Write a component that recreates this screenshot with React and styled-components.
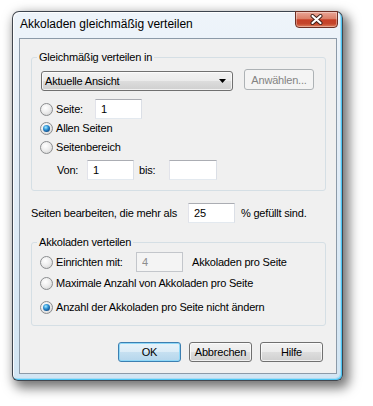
import React from "react";
import styled, { createGlobalStyle } from "styled-components";

const GlobalStyle = createGlobalStyle`
  html, body {
    margin: 0;
    padding: 0;
    background: #fff;
  }
  body {
    font-family: "Liberation Sans", Arial, sans-serif;
    font-size: 11px;
    letter-spacing: -0.2px;
    color: #000;
  }
`;

const Page = styled.div`
  width: 373px;
  height: 406px;
  padding: 11px 0 0 12px;
  box-sizing: border-box;
  overflow: hidden;
`;

const Window = styled.div`
  width: 331px;
  height: 370px;
  box-sizing: border-box;
  display: flex;
  flex-direction: column;
  border: 1px solid rgba(35, 40, 48, 0.85);
  border-radius: 7px 7px 6px 6px;
  background: linear-gradient(to bottom, #eef4fa 0%, #e3edf7 40%, #d2e5f3 100%);
  box-shadow: inset -1px -1px 0 #4cc5f3, inset -2px -2px 0 #a9dcf4,
    inset 1px 1px 0 rgba(255, 255, 255, 0.85), 4px 5px 12px 2px rgba(0, 0, 0, 0.55);
`;

const TitleBar = styled.div`
  height: 26px;
  display: flex;
  align-items: flex-start;
  flex-shrink: 0;
`;

const Title = styled.div`
  padding: 5px 0 0 7px;
  font-size: 12px;
  line-height: 14px;
  letter-spacing: 0;
  white-space: nowrap;
`;

const CloseButton = styled.div`
  margin: -1px 4px 0 auto;
  width: 43px;
  height: 17px;
  box-sizing: border-box;
  border: 1px solid #6e2f24;
  border-radius: 0 0 4px 4px;
  background: linear-gradient(to bottom, #e9a596 0%, #db8069 45%, #c63f26 52%, #c4452b 78%, #e07f5c 100%);
  box-shadow: inset 0 0 0 1px rgba(255, 255, 255, 0.35);
  display: flex;
  align-items: center;
  justify-content: center;
`;

const Client = styled.div`
  flex: 1;
  margin: 0 5px 6px 6px;
  border: 1px solid #8c9aa8;
  background: #f0f0f0;
  padding: 11px 10px 0 11px;
  display: flex;
  flex-direction: column;
`;

const Group = styled.fieldset`
  margin: ${(p) => p.$mt || 0}px 0 0 0;
  padding: ${(p) => p.$pt}px 10px ${(p) => p.$pb}px 9px;
  border: 1px solid #d5dfe5;
  border-radius: 3px;
  min-width: 0;
`;

const Legend = styled.legend`
  padding: 0 2px;
  margin-left: -4px;
  font-size: 11px;
  line-height: 14px;
`;

const Row = styled.div`
  display: flex;
  align-items: ${(p) => p.$align || "center"};
  height: ${(p) => p.$h || 18}px;
  margin-top: ${(p) => p.$mt || 0}px;
  padding-left: ${(p) => p.$pl || 0}px;
  white-space: nowrap;
`;

const Option = styled.label`
  display: flex;
  align-items: center;
  gap: 3px;
  margin-left: -1px;
  width: ${(p) => (p.$w ? `${p.$w}px` : "auto")};
  flex-shrink: 0;
`;

const RadioMark = styled.span`
  width: 13px;
  height: 13px;
  box-sizing: border-box;
  border-radius: 50%;
  border: 1px solid #8b8d8f;
  background: radial-gradient(circle at 40% 35%, #ffffff 0%, #eeeeee 45%, #cdcdcd 100%);
  display: flex;
  align-items: center;
  justify-content: center;
  flex-shrink: 0;

  &::after {
    content: "";
    width: 7px;
    height: 7px;
    border-radius: 50%;
    display: ${(p) => (p.$checked ? "block" : "none")};
    background: radial-gradient(circle at 40% 35%, #a6ecff 0%, #2f93d6 38%, #0f4d8a 75%, #0a3564 100%);
  }
`;

const Text = styled.span`
  display: inline-block;
  width: ${(p) => (p.$w ? `${p.$w}px` : "auto")};
  margin-left: ${(p) => p.$ml || 0}px;
  flex-shrink: 0;
`;

const Input = styled.input`
  width: ${(p) => p.$w}px;
  height: 20px;
  box-sizing: border-box;
  margin: 0;
  padding: 0 0 0 5px;
  border: 1px solid;
  border-color: ${(p) => (p.$disabled ? "#c3c6cb" : "#abadb3 #dbdfe6 #e3e9ef #e2e3ea")};
  background: ${(p) => (p.$disabled ? "#f4f4f4" : "#fff")};
  color: ${(p) => (p.$disabled ? "#8d8d8d" : "#000")};
  font: inherit;
  letter-spacing: inherit;
  outline: none;
  flex-shrink: 0;
`;

const Select = styled.div`
  width: 192px;
  height: 20px;
  margin-top: 2px;
  box-sizing: border-box;
  border: 1px solid #707070;
  border-radius: 3px;
  background: linear-gradient(to bottom, #f2f2f2 0%, #ebebeb 50%, #dddddd 51%, #cfcfcf 100%);
  box-shadow: inset 0 0 0 1px rgba(255, 255, 255, 0.7);
  display: flex;
  align-items: center;
  justify-content: space-between;
  padding: 0 6px 0 3px;
`;

const SideButton = styled.div`
  width: 70px;
  height: 21px;
  margin-left: 11px;
  box-sizing: border-box;
  border: 1px solid #adb2b5;
  border-radius: 3px;
  background: #f4f4f4;
  color: #838383;
  display: flex;
  align-items: center;
  justify-content: center;
`;

const ButtonBar = styled.div`
  display: flex;
  justify-content: flex-end;
  gap: 8px;
  margin-top: 16px;
  padding-right: 3px;
`;

const Button = styled.div`
  width: 63px;
  height: 20px;
  box-sizing: border-box;
  border: 1px solid ${(p) => (p.$default ? "#3c7fb1" : "#707070")};
  border-radius: 3px;
  background: ${(p) =>
    p.$default
      ? "linear-gradient(to bottom, #e8f3fa 0%, #dbecf7 50%, #c6e0f1 51%, #b5d6ec 100%)"
      : "linear-gradient(to bottom, #f2f2f2 0%, #ebebeb 50%, #dddddd 51%, #cfcfcf 100%)"};
  box-shadow: inset 0 0 0 1px ${(p) => (p.$default ? "#8fd8f8" : "rgba(255, 255, 255, 0.7)")};
  display: flex;
  align-items: center;
  justify-content: center;
`;

const Radio = ({ checked, width, children }) => (
  <Option $w={width}>
    <RadioMark $checked={checked} />
    {children}
  </Option>
);

const App = () => {
  return (
    <>
      <GlobalStyle />
      <Page>
        <Window>
          <TitleBar>
            <Title>Akkoladen gleichmäßig verteilen</Title>
            <CloseButton>
              <svg width="13" height="11" viewBox="0 0 13 11">
                <path d="M2.5 2 L10.5 9 M10.5 2 L2.5 9" stroke="#3b1d17" strokeWidth="4" strokeLinecap="round" fill="none" />
                <path d="M2.5 2 L10.5 9 M10.5 2 L2.5 9" stroke="#ffffff" strokeWidth="2.2" strokeLinecap="round" fill="none" />
              </svg>
            </CloseButton>
          </TitleBar>

          <Client>
            <Group $pt={5} $pb={10}>
              <Legend>Gleichmäßig verteilen in</Legend>
              <Row $h={22} $align="flex-start">
                <Select>
                  <span>Aktuelle Ansicht</span>
                  <svg width="7" height="4" viewBox="0 0 7 4">
                    <path d="M0 0 H7 L3.5 4 Z" fill="#000" />
                  </svg>
                </Select>
                <SideButton>Anwählen...</SideButton>
              </Row>
              <Row $h={20} $mt={8}>
                <Radio width={55}>Seite:</Radio>
                <Input $w={47} defaultValue="1" />
              </Row>
              <Row $h={18}>
                <Radio checked>Allen Seiten</Radio>
              </Row>
              <Row $h={20}>
                <Radio>Seitenbereich</Radio>
              </Row>
              <Row $h={20} $mt={3} $pl={16}>
                <Text $w={30}>Von:</Text>
                <Input $w={47} defaultValue="1" />
                <Text $w={30} $ml={5}>bis:</Text>
                <Input $w={48} defaultValue="" />
              </Row>
            </Group>

            <Row $h={20} $mt={12}>
              <Text $w={157}>Seiten bearbeiten, die mehr als</Text>
              <Input $w={47} defaultValue="25" />
              <Text $ml={6}>% gefüllt sind.</Text>
            </Row>

            <Group $mt={12} $pt={3} $pb={9}>
              <Legend>Akkoladen verteilen</Legend>
              <Row $h={20}>
                <Radio width={96}>Einrichten mit:</Radio>
                <Input $w={47} $disabled disabled defaultValue="4" />
                <Text $ml={9}>Akkoladen pro Seite</Text>
              </Row>
              <Row $h={18} $mt={2}>
                <Radio>Maximale Anzahl von Akkoladen pro Seite</Radio>
              </Row>
              <Row $h={18} $mt={6}>
                <Radio checked>Anzahl der Akkoladen pro Seite nicht ändern</Radio>
              </Row>
            </Group>

            <ButtonBar>
              <Button $default>OK</Button>
              <Button>Abbrechen</Button>
              <Button>Hilfe</Button>
            </ButtonBar>
          </Client>
        </Window>
      </Page>
    </>
  );
};

export default App;
